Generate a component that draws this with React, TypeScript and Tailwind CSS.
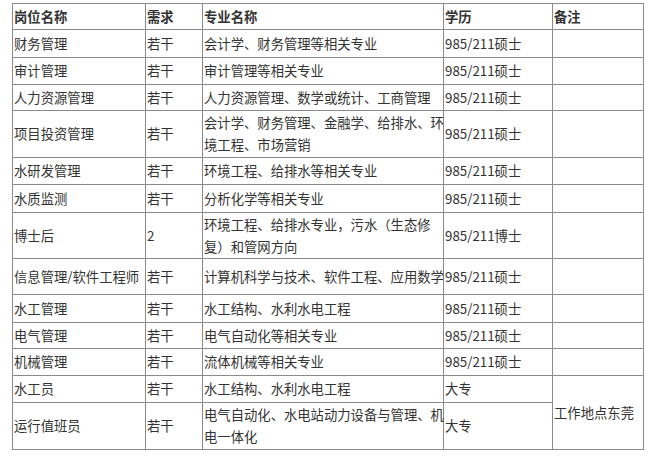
const rows: { name: string; need: string; major: React.ReactNode; edu: string; h: string }[] = [
  { name: '财务管理', need: '若干', major: '会计学、财务管理等相关专业', edu: '985/211硕士', h: 'h-[28px]' },
  { name: '审计管理', need: '若干', major: '审计管理等相关专业', edu: '985/211硕士', h: 'h-[27px]' },
  { name: '人力资源管理', need: '若干', major: '人力资源管理、数学或统计、工商管理', edu: '985/211硕士', h: 'h-[26px]' },
  {
    name: '项目投资管理',
    need: '若干',
    major: (
      <>
        会计学、财务管理、金融学、给排水、环
        <br />
        境工程、市场营销
      </>
    ),
    edu: '985/211硕士',
    h: 'h-[47px]',
  },
  { name: '水研发管理', need: '若干', major: '环境工程、给排水等相关专业', edu: '985/211硕士', h: 'h-[27px]' },
  { name: '水质监测', need: '若干', major: '分析化学等相关专业', edu: '985/211硕士', h: 'h-[28px]' },
  {
    name: '博士后',
    need: '2',
    major: (
      <>
        环境工程、给排水专业，污水（生态修
        <br />
        复）和管网方向
      </>
    ),
    edu: '985/211博士',
    h: 'h-[46px]',
  },
  { name: '信息管理/软件工程师', need: '若干', major: '计算机科学与技术、软件工程、应用数学', edu: '985/211硕士', h: 'h-[36px]' },
  { name: '水工管理', need: '若干', major: '水工结构、水利水电工程', edu: '985/211硕士', h: 'h-[28px]' },
  { name: '电气管理', need: '若干', major: '电气自动化等相关专业', edu: '985/211硕士', h: 'h-[26px]' },
  { name: '机械管理', need: '若干', major: '流体机械等相关专业', edu: '985/211硕士', h: 'h-[27px]' },
];

const td = 'border border-[#8a8a8a] pl-px align-middle whitespace-nowrap leading-[22px] p-0';

export default function App() {
  return (
    <div
      className="w-[661px] h-[458px] bg-white pl-[12px] pt-[3px] text-[#333] text-[13.33px]"
      style={{ fontFamily: '"Noto Sans CJK SC", "Noto Sans", sans-serif' }}
    >
      <table className="w-[631px] table-fixed border-collapse border border-[#222]">
        <colgroup>
          <col className="w-[133px]" />
          <col className="w-[57px]" />
          <col className="w-[241px]" />
          <col className="w-[109px]" />
          <col className="w-[91px]" />
        </colgroup>
        <tbody>
          <tr className="h-[26px] font-bold">
            <td className={td}>岗位名称</td>
            <td className={td}>需求</td>
            <td className={td}>专业名称</td>
            <td className={td}>学历</td>
            <td className={td}>备注</td>
          </tr>
          {rows.map((r) => (
            <tr key={r.name} className={r.h}>
              <td className={td}>{r.name}</td>
              <td className={td}>{r.need}</td>
              <td className={td}>{r.major}</td>
              <td className={td}>{r.edu}</td>
              <td className={td}></td>
            </tr>
          ))}
          <tr className="h-[27px]">
            <td className={td}>水工员</td>
            <td className={td}>若干</td>
            <td className={td}>水工结构、水利水电工程</td>
            <td className={td}>大专</td>
            <td className={td} rowSpan={2}>
              工作地点东莞
            </td>
          </tr>
          <tr className="h-[47px]">
            <td className={td}>运行值班员</td>
            <td className={td}>若干</td>
            <td className={td}>
              电气自动化、水电站动力设备与管理、机
              <br />
              电一体化
            </td>
            <td className={td}>大专</td>
          </tr>
        </tbody>
      </table>
    </div>
  );
}
